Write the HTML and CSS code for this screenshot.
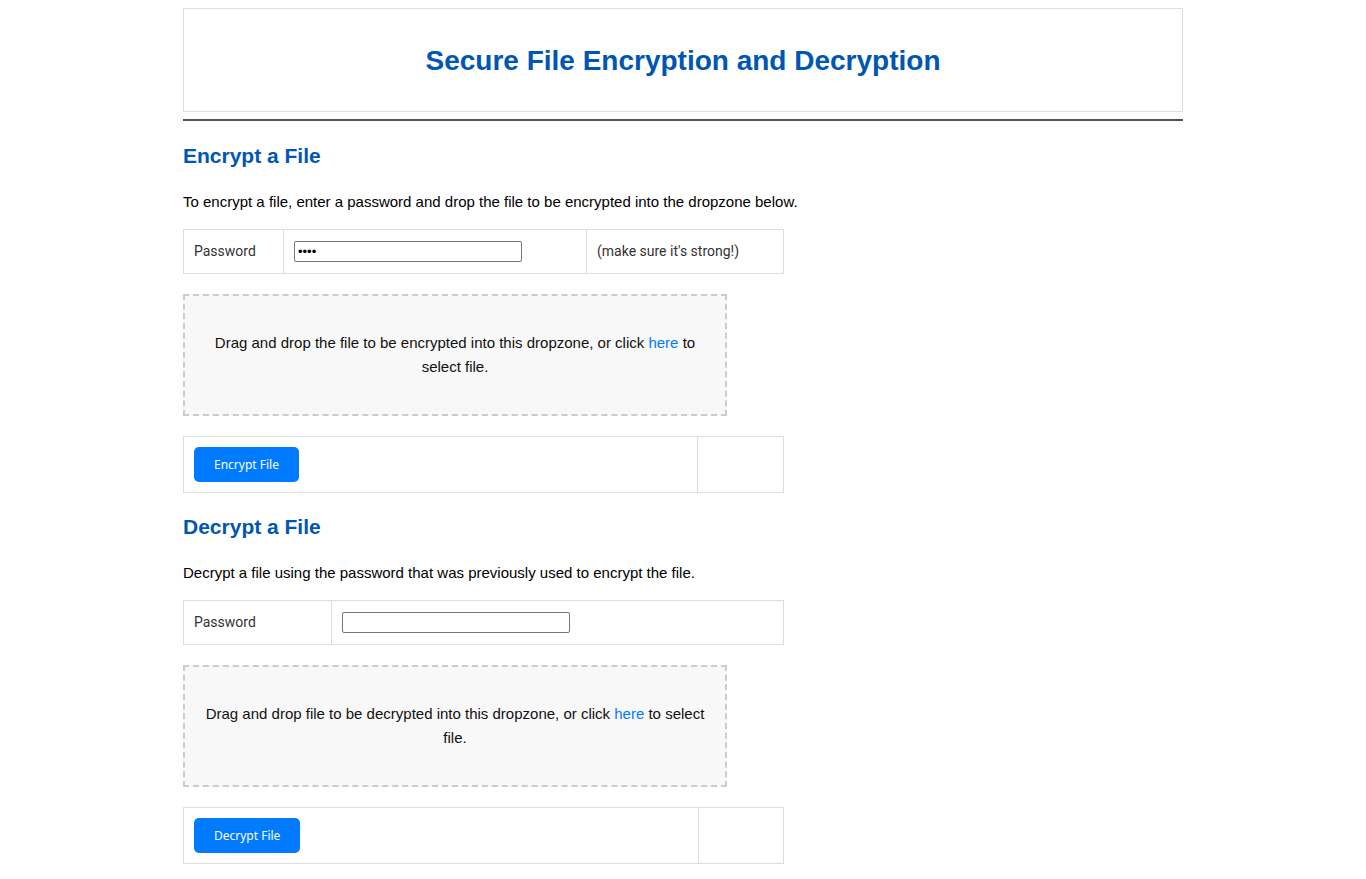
FILE: index.html
```html
<!DOCTYPE html>
<html>
<head>
<meta charset="utf-8">
<title>Secure File Encryption and Decryption</title>
<link rel="stylesheet" href="styles.css">
</head>
<body>
<div class="page">
  <header class="header">
    <h1>Secure File Encryption and Decryption</h1>
  </header>
  <hr class="rule">

  <section class="section">
    <h2>Encrypt a File</h2>
    <p class="lead">To encrypt a file, enter a password and drop the file to be encrypted into the dropzone below.</p>
    <table class="grid grid-enc">
      <tr>
        <td class="c-label">Password</td>
        <td class="c-input"><input type="password" class="pw" value="abcd"></td>
        <td class="c-note">(make sure it's strong!)</td>
      </tr>
    </table>
    <div class="dropzone">Drag and drop the file to be encrypted into this dropzone, or click <a href="#">here</a> to select file.</div>
    <table class="grid grid-btn">
      <tr>
        <td class="c-btn"><button class="btn">Encrypt File</button></td>
        <td class="c-empty enc-empty"></td>
      </tr>
    </table>
  </section>

  <section class="section">
    <h2>Decrypt a File</h2>
    <p class="lead">Decrypt a file using the password that was previously used to encrypt the file.</p>
    <table class="grid grid-dec">
      <tr>
        <td class="c-label dec-label">Password</td>
        <td class="c-input"><input type="password" class="pw"></td>
      </tr>
    </table>
    <div class="dropzone">Drag and drop file to be decrypted into this dropzone, or click <a href="#">here</a> to select file.</div>
    <table class="grid grid-btn">
      <tr>
        <td class="c-btn"><button class="btn">Decrypt File</button></td>
        <td class="c-empty dec-empty"></td>
      </tr>
    </table>
  </section>
</div>
</body>
</html>
```

FILE: styles.css
```css
html, body {
  margin: 0;
  padding: 0;
  background: #fff;
}
body {
  padding: 8px 0;
  font-family: "Liberation Sans", Arial, sans-serif;
  color: #000;
}
.page {
  width: 1000px;
  margin: 0 auto;
}
.header {
  border: 1px solid #ddd;
  height: 100px;
  padding-top: 2px;
  display: flex;
  align-items: center;
  justify-content: center;
}
.header h1 {
  margin: 0;
  font-size: 28px;
  line-height: 32px;
  font-weight: bold;
  color: #0056b3;
}
.rule {
  border: none;
  height: 2px;
  background: #555;
  margin: 7px 0 0 0;
}
.section h2 {
  margin: 23px 0 0 0;
  font-size: 21px;
  line-height: 24px;
  font-weight: bold;
  color: #0056b3;
}
.section + .section h2 {
  margin-top: 22px;
}
.lead {
  margin: 25px 0 0 0;
  font-size: 15px;
  line-height: 18px;
}
.grid {
  border-collapse: collapse;
  width: 601px;
  margin-top: 18px;
  font-family: Roboto, "Liberation Sans", sans-serif;
  font-size: 14px;
  color: #333;
}
.grid td {
  border: 1px solid #ddd;
  padding: 11px 10px;
  vertical-align: middle;
  line-height: 21px;
}
.c-label { width: 79px; }
.dec-label { width: 127px; }
.c-note { width: 176px; }
.pw {
  display: block;
  box-sizing: border-box;
  width: 228px;
  height: 21px;
  margin: 0;
  padding: 1px 3px;
  border: 1px solid #767676;
  border-radius: 2px;
  font-size: 13px;
  background: #fff;
}
.dropzone {
  box-sizing: border-box;
  width: 544px;
  margin-top: 20px;
  padding: 35px 20px 35px;
  border: 2px dashed #ccc;
  background: #f8f8f8;
  text-align: center;
  font-size: 15px;
  line-height: 24px;
  color: #111;
}
.dropzone a {
  color: #007bff;
  text-decoration: none;
}
.grid-btn {
  margin-top: 20px;
}
.grid-btn td {
  padding: 10px;
  line-height: 35px;
}
.enc-empty { width: 65px; }
.dec-empty { width: 64px; }
.btn {
  display: block;
  height: 35px;
  padding: 0 20px;
  border: none;
  border-radius: 5px;
  background: #007bff;
  color: #fff;
  font-family: "Noto Sans", "Open Sans", sans-serif;
  font-size: 12px;
  letter-spacing: 0;
  cursor: pointer;
}
```
